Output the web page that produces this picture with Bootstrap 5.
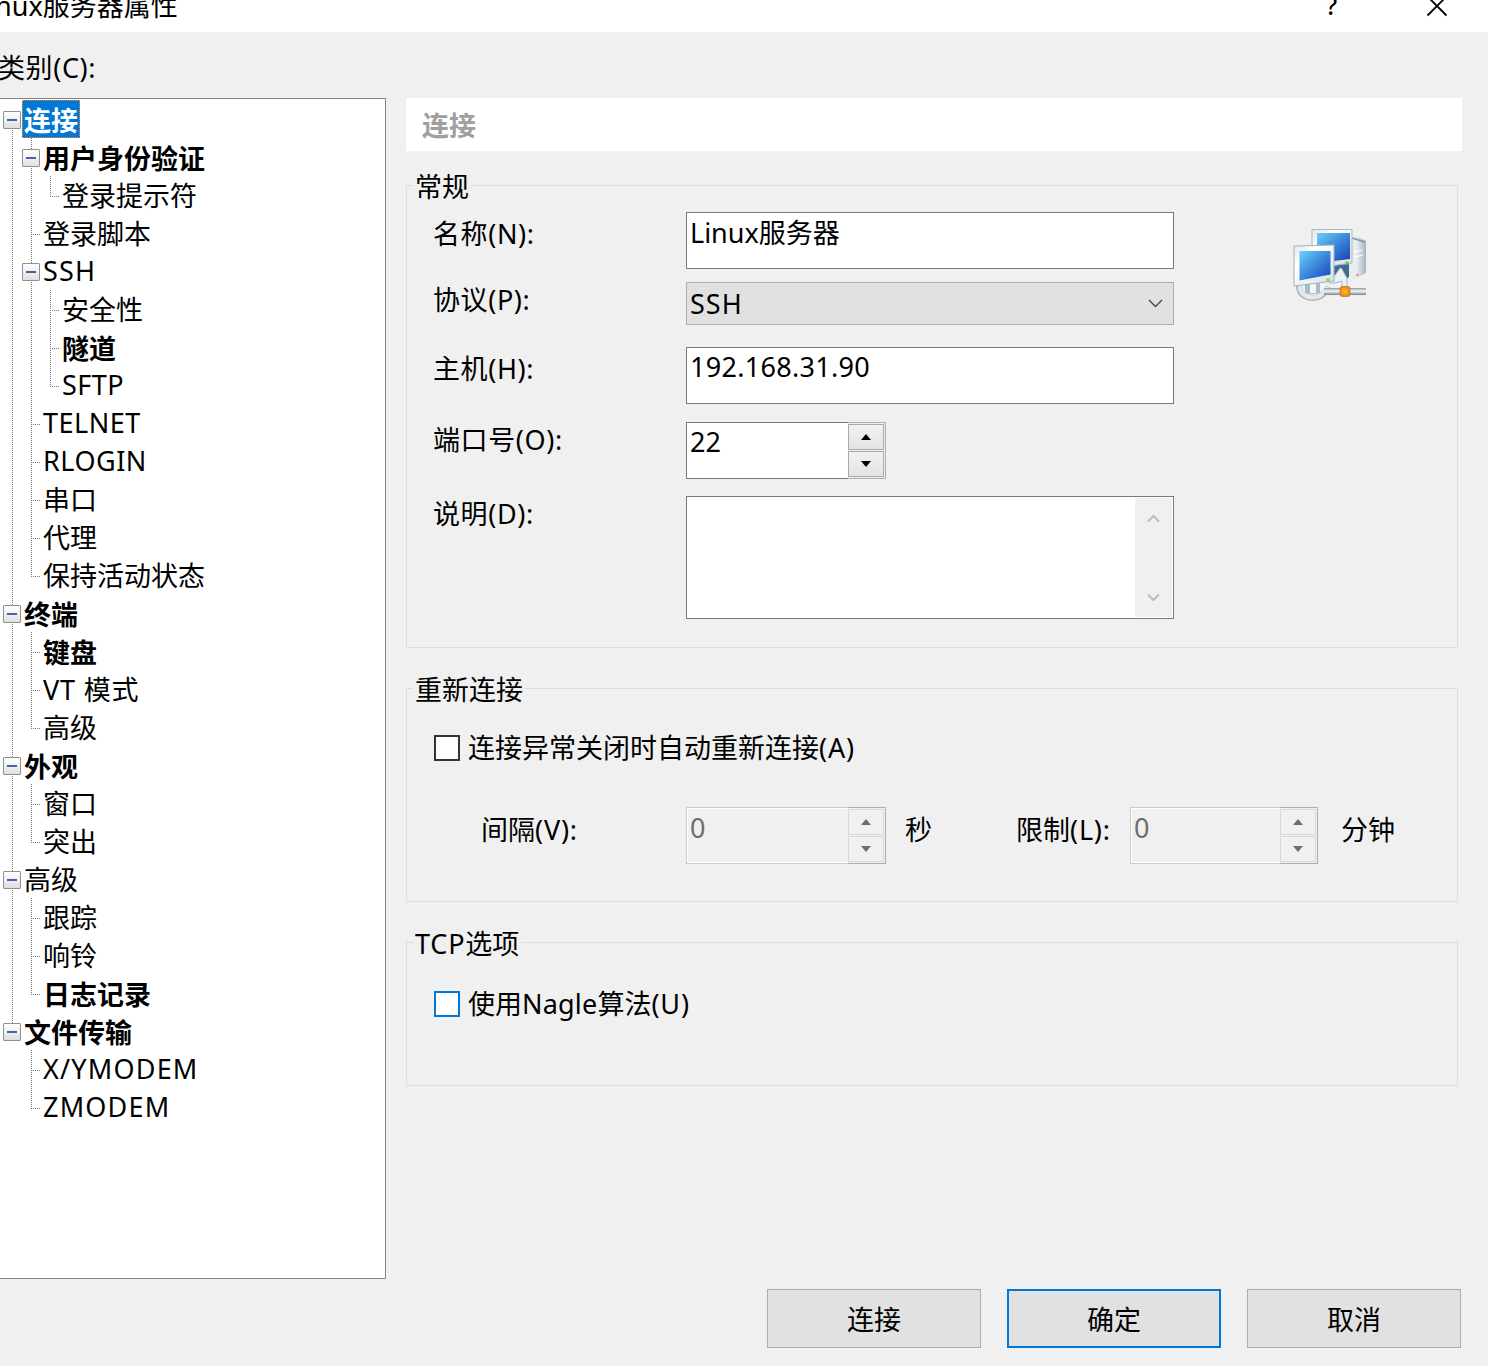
<!DOCTYPE html>
<html lang="zh-CN">
<head>
<meta charset="utf-8">
<meta name="viewport" content="width=device-width, initial-scale=1">
<title>Linux服务器属性</title>
<link href="https://cdn.jsdelivr.net/npm/bootstrap@5.3.0/dist/css/bootstrap.min.css" rel="stylesheet">
<style>
body{background:#f0f0f0;color:#000;font-family:"Noto Sans","Noto Sans CJK SC",sans-serif;font-size:27px;line-height:36px;width:1488px;height:1366px;overflow:hidden}
input,button{font-family:inherit}
.titlebar{height:32px}
.title-text{margin:-12px 0 0 -26px;white-space:nowrap}
.win-btns{margin-right:40px}
.help-mark{font-size:25px;font-weight:500;margin-top:-13px;width:13px}
.close-x{margin:-5px 0 0 87px;width:22px;height:22px}
.cat-label{height:66px;padding-top:18px;margin-left:-2px;letter-spacing:.6px}
/* category tree */
.tree{width:386px;height:1181px;background:#fff;border:1px solid #828790;border-left:0;padding:1px 0 0 3px}
.trow{height:38px}
.gd{width:19px;height:38px;flex:none;background-repeat:no-repeat;
 --v:repeating-linear-gradient(to bottom,#777 0 1px,#fff 1px 2px);
 --h:repeating-linear-gradient(to right,#777 0 1px,#fff 1px 2px)}
.gv{background-image:var(--v);background-size:1px 38px;background-position:9px 0}
.gt{background-image:var(--v),var(--h);background-size:1px 38px,9px 1px;background-position:9px 0,9px 20px}
.gl{background-image:var(--v),var(--h);background-size:1px 21px,9px 1px;background-position:9px 0,9px 20px}
.gup{background-image:var(--v);background-size:1px 11px;background-position:9px 0}
.gfirst{background-position:9px 20px;background-image:var(--v);background-size:1px 18px}
.tg{width:18px;height:18px;margin-top:11px;border:1px solid #919191;border-radius:1px;background:linear-gradient(#fff,#e0e0e0);display:flex;align-items:center;justify-content:center}
.tg::after{content:"";width:10px;height:2px;background:#4762a8}
.tt{line-height:40px;height:38px;padding-left:2px;white-space:nowrap}
b.tt{line-height:42px}
.tt.la{line-height:38px;letter-spacing:.5px}
.tt.wide{letter-spacing:1.2px}
.tt.sel{background:#0078d7;color:#fff;width:58px;outline:1px dotted #ff8728;outline-offset:-1px}
/* right side */
.pane{width:1056px;margin-left:20px}
.pane-head{height:53px;background:#fff;color:#a0a0a0;padding:10px 0 0 16px}
.grp{width:1052px;border:1px solid #dcdcdc;padding-left:27px}
.grp-t{width:max-content;margin:-17px 0 0 -21px;padding:0 2px;background:#f0f0f0;white-space:nowrap}
.g1{height:463px;margin-top:34px}.g2{height:214px;margin-top:40px}.g3{height:144px;margin-top:40px}
.flabel{width:253px;margin-left:-1px;flex:none;letter-spacing:.6px}
.box{width:488px;height:57px;border:1px solid #7a7a7a;border-radius:0;background:#fff;padding:0 3px 18px;font-size:27px;color:#000;line-height:36px}
.num{letter-spacing:.3px}
.combo{width:488px;height:43px;border:1px solid #adadad;background:#e1e1e1;padding:0 10px 0 3px;letter-spacing:1px}
.spin{height:57px}
.spin .box{width:162px;border-right:0;padding-bottom:19px}
.spin.narrow .box{width:150px}
.ud{width:38px;border:1px solid #adadb3;border-left:0;padding:1px 1px 1px 0}
.ud>i{display:flex;align-items:center;justify-content:center;height:26px;border:1px solid #a9a9a9;background:linear-gradient(#f1f1f1,#e4e4e4)}
.ud>i+i{margin-top:1px}
.spin.off .box{background:#f0f0f0;border-color:#ccc;color:#6d6d6d;box-shadow:inset 1px 1px #fff,inset 0 -1px #fff;padding-bottom:17px}
.spin.off .ud>i{border-color:#d9d9d9;background:#f0f0f0}
.spin.off svg{fill:#6d6d6d}
.memo{width:488px;height:123px;border:1px solid #7a7a7a;background:#fff;padding:1px}
.sbar{width:37px;background:#f0f0f0;padding:16px 0 15px}
.chk{width:26px;height:26px;border:2px solid #333;background:#fff;flex:none}
.chk.hot{border-color:#0078d7}
.lat{letter-spacing:.8px}
.host-ico{margin:23px 0 0 119px;width:75px;height:76px}
.host-ico>g{filter:blur(.45px)}
.foot{margin-top:10px;padding-right:27px;gap:26px}
.foot .btn{width:214px;height:59px;border:1px solid #adadad;border-radius:0;background:#e1e1e1;font-size:27px;line-height:36px;padding:3px 0 0;color:#000}
.foot .btn.def{border:2px solid #0078d7}
</style>
</head>
<body>
<header class="titlebar bg-white d-flex justify-content-between align-items-start">
  <div class="title-text">Linux服务器属性</div>
  <div class="win-btns d-flex align-items-start">
    <div class="help-mark">?</div>
    <svg class="close-x" viewBox="0 0 22 22"><path d="M1.500 1.500L20.500 20.500M20.500 1.500L1.500 20.500" stroke="#000" stroke-width="1.8"/></svg>
  </div>
</header>
<div class="cat-label">类别(C):</div>
<main class="d-flex align-items-start">
  <nav class="tree flex-shrink-0">
    <div class="trow d-flex"><span class="gd gfirst"><span class="tg"></span></span><b class="tt sel">连接</b></div>
    <div class="trow d-flex"><span class="gd gv"></span><span class="gd gv"><span class="tg"></span></span><b class="tt">用户身份验证</b></div>
    <div class="trow d-flex"><span class="gd gv"></span><span class="gd gv"></span><span class="gd gl"></span><span class="tt">登录提示符</span></div>
    <div class="trow d-flex"><span class="gd gv"></span><span class="gd gt"></span><span class="tt">登录脚本</span></div>
    <div class="trow d-flex"><span class="gd gv"></span><span class="gd gv"><span class="tg"></span></span><span class="tt la wide">SSH</span></div>
    <div class="trow d-flex"><span class="gd gv"></span><span class="gd gv"></span><span class="gd gt"></span><span class="tt">安全性</span></div>
    <div class="trow d-flex"><span class="gd gv"></span><span class="gd gv"></span><span class="gd gt"></span><b class="tt">隧道</b></div>
    <div class="trow d-flex"><span class="gd gv"></span><span class="gd gv"></span><span class="gd gl"></span><span class="tt la">SFTP</span></div>
    <div class="trow d-flex"><span class="gd gv"></span><span class="gd gt"></span><span class="tt la">TELNET</span></div>
    <div class="trow d-flex"><span class="gd gv"></span><span class="gd gt"></span><span class="tt la">RLOGIN</span></div>
    <div class="trow d-flex"><span class="gd gv"></span><span class="gd gt"></span><span class="tt">串口</span></div>
    <div class="trow d-flex"><span class="gd gv"></span><span class="gd gt"></span><span class="tt">代理</span></div>
    <div class="trow d-flex"><span class="gd gv"></span><span class="gd gl"></span><span class="tt">保持活动状态</span></div>
    <div class="trow d-flex"><span class="gd gv"><span class="tg"></span></span><b class="tt">终端</b></div>
    <div class="trow d-flex"><span class="gd gv"></span><span class="gd gt"></span><b class="tt">键盘</b></div>
    <div class="trow d-flex"><span class="gd gv"></span><span class="gd gt"></span><span class="tt lat">VT 模式</span></div>
    <div class="trow d-flex"><span class="gd gv"></span><span class="gd gl"></span><span class="tt">高级</span></div>
    <div class="trow d-flex"><span class="gd gv"><span class="tg"></span></span><b class="tt">外观</b></div>
    <div class="trow d-flex"><span class="gd gv"></span><span class="gd gt"></span><span class="tt">窗口</span></div>
    <div class="trow d-flex"><span class="gd gv"></span><span class="gd gl"></span><span class="tt">突出</span></div>
    <div class="trow d-flex"><span class="gd gv"><span class="tg"></span></span><span class="tt">高级</span></div>
    <div class="trow d-flex"><span class="gd gv"></span><span class="gd gt"></span><span class="tt">跟踪</span></div>
    <div class="trow d-flex"><span class="gd gv"></span><span class="gd gt"></span><span class="tt">响铃</span></div>
    <div class="trow d-flex"><span class="gd gv"></span><span class="gd gl"></span><b class="tt">日志记录</b></div>
    <div class="trow d-flex"><span class="gd gup"><span class="tg"></span></span><b class="tt">文件传输</b></div>
    <div class="trow d-flex"><span class="gd"></span><span class="gd gt"></span><span class="tt la wide">X/YMODEM</span></div>
    <div class="trow d-flex"><span class="gd"></span><span class="gd gl"></span><span class="tt la wide">ZMODEM</span></div>
  </nav>
  <section class="pane">
    <div class="pane-head fw-bold">连接</div>

    <div class="grp g1">
      <div class="grp-t">常规</div>
      <div class="d-flex align-items-start">
        <div>
          <div class="d-flex" style="margin-top:7px"><label class="flabel pt-1">名称(N):</label><input class="box" value="Linux服务器"></div>
          <div class="d-flex" style="margin-top:13px"><label class="flabel">协议(P):</label>
            <div class="combo d-flex align-items-center justify-content-between"><span>SSH</span>
              <svg width="15" height="9" viewBox="0 0 15 9"><path d="M1 1L7.500 7.500L14 1" fill="none" stroke="#444" stroke-width="1.400"/></svg></div></div>
          <div class="d-flex" style="margin-top:22px"><label class="flabel pt-1">主机(H):</label><input class="box num" value="192.168.31.90"></div>
          <div class="d-flex" style="margin-top:18px"><label class="flabel">端口号(O):</label>
            <div class="spin d-flex"><input class="box" value="22"><div class="ud"><i><svg width="10" height="6"><path d="M0 6L5 0L10 6Z"/></svg></i><i><svg width="10" height="6"><path d="M0 0L5 6L10 0Z"/></svg></i></div></div></div>
          <div class="d-flex" style="margin-top:17px"><label class="flabel">说明(D):</label>
            <div class="memo d-flex justify-content-end"><div class="sbar d-flex flex-column justify-content-between align-items-center">
              <svg width="13" height="9" viewBox="0 0 13 9"><path d="M1 7.500L6.500 2L12 7.500" fill="none" stroke="#bcbcbc" stroke-width="2"/></svg>
              <svg width="13" height="9" viewBox="0 0 13 9"><path d="M1 1.500L6.500 7L12 1.500" fill="none" stroke="#bcbcbc" stroke-width="2"/></svg></div></div></div>
        </div>
        <svg class="host-ico" viewBox="0 0 75 76">
          <defs>
            <linearGradient id="scr" x1="0" y1="0" x2="1" y2="1"><stop offset="0" stop-color="#6bd3f5"/><stop offset=".5" stop-color="#3c88dc"/><stop offset="1" stop-color="#1e3fb4"/></linearGradient>
            <linearGradient id="shell" x1="0" y1="0" x2="1" y2="0"><stop offset="0" stop-color="#e4ebef"/><stop offset=".5" stop-color="#e9eef1"/><stop offset="1" stop-color="#a3b4c2"/></linearGradient>
            <linearGradient id="frm" x1="0" y1="0" x2="1" y2="1"><stop offset="0" stop-color="#dfe7ec"/><stop offset=".3" stop-color="#fff"/><stop offset="1" stop-color="#d3dee4"/></linearGradient>
            <linearGradient id="pipe" x1="0" y1="0" x2="0" y2="1"><stop offset="0" stop-color="#8b9aa6"/><stop offset=".45" stop-color="#f4f7f8"/><stop offset="1" stop-color="#75838f"/></linearGradient>
            <radialGradient id="plug"><stop offset="0" stop-color="#ffc928"/><stop offset="1" stop-color="#ee7f14"/></radialGradient>
          </defs>
          <g>
          <path d="M57 11Q60 8 64 8L73 13V43Q73 46 69 47L60 51L54 47Z" fill="url(#shell)"/>
          <path d="M59 10L72 14" stroke="#7d95a8" stroke-width="1.500"/>
          <path d="M61 24L70 22M61 29L70 27" stroke="#fff" stroke-width="1.200"/>
          <circle cx="64.500" cy="47" r="1.600" fill="#f3a38c"/>
          <path d="M40 37L56 34V49L50 53L40 48Z" fill="#3f6a94"/>
          <path d="M19 1.500H59V35L41 37.500L19 33Z" fill="url(#frm)" stroke="#a9b9c5"/>
          <path d="M24 5H57V31L41 33L24 30Z" fill="url(#scr)"/>
          <path d="M36 55L45 43Q48 37 50 43L54 50V61H49V53L42 55Z" fill="#eaf0f3" stroke="#9fb0bd" stroke-width=".9"/>
          <path d="M6 58C6 66 12 70 20 70C27 70 32 66 36 59" fill="none" stroke="#a5b4be" stroke-width="6"/>
          <path d="M6.500 58C7 65 12 69.500 20 69.500C27 69.500 31 66 35 59" fill="none" stroke="#e3eaee" stroke-width="4"/>
          <path d="M12 55H27V65Q20 67 12 65Z" fill="#a9b9c5"/><path d="M17 55H23V65H17Z" fill="#f4f8fa"/>
          <rect x="31" y="60" width="42" height="7" fill="url(#pipe)"/>
          <path d="M1 18L41 17V53L1 58Z" fill="url(#frm)" stroke="#a2b3bf"/>
          <path d="M6.500 23H37.500V46.500L6.500 52.500Z" fill="url(#scr)"/>
          <circle cx="35" cy="52" r="2" fill="#8bdc63"/><circle cx="54" cy="35" r="1.700" fill="#63c94a"/>
          <rect x="47" y="58.500" width="10" height="10" rx="2" fill="url(#plug)" stroke="#b98045" stroke-width=".8"/>
          </g>
        </svg>
      </div>
    </div>

    <div class="grp g2">
      <div class="grp-t">重新连接</div>
      <label class="d-flex align-items-center" style="margin-top:22px"><span class="chk me-2"></span>连接异常关闭时自动重新连接<span class="lat">(A)</span></label>
      <div class="d-flex align-items-start" style="margin-top:41px">
        <span style="width:205px;margin:5px 0 0 47px">间隔<span class="lat">(V):</span></span>
        <div class="spin off d-flex"><input class="box" value="0" disabled><div class="ud"><i><svg width="10" height="6"><path d="M0 6L5 0L10 6Z"/></svg></i><i><svg width="10" height="6"><path d="M0 0L5 6L10 0Z"/></svg></i></div></div>
        <span style="width:111px;margin:5px 0 0 19px">秒</span>
        <span style="width:114px;margin-top:5px">限制<span class="lat">(L):</span></span>
        <div class="spin off narrow d-flex"><input class="box" value="0" disabled><div class="ud"><i><svg width="10" height="6"><path d="M0 6L5 0L10 6Z"/></svg></i><i><svg width="10" height="6"><path d="M0 0L5 6L10 0Z"/></svg></i></div></div>
        <span style="margin:5px 0 0 23px">分钟</span>
      </div>
    </div>

    <div class="grp g3">
      <div class="grp-t"><span class="lat">TCP</span>选项</div>
      <label class="d-flex align-items-center" style="margin-top:24px"><span class="chk hot me-2"></span>使用<span style="letter-spacing:.2px">Nagle</span>算法<span class="lat">(U)</span></label>
    </div>
  </section>
</main>
<footer class="foot d-flex justify-content-end">
  <button class="btn">连接</button>
  <button class="btn def">确定</button>
  <button class="btn">取消</button>
</footer>
<script src="https://cdn.jsdelivr.net/npm/bootstrap@5.3.0/dist/js/bootstrap.bundle.min.js"></script>
</body>
</html>
